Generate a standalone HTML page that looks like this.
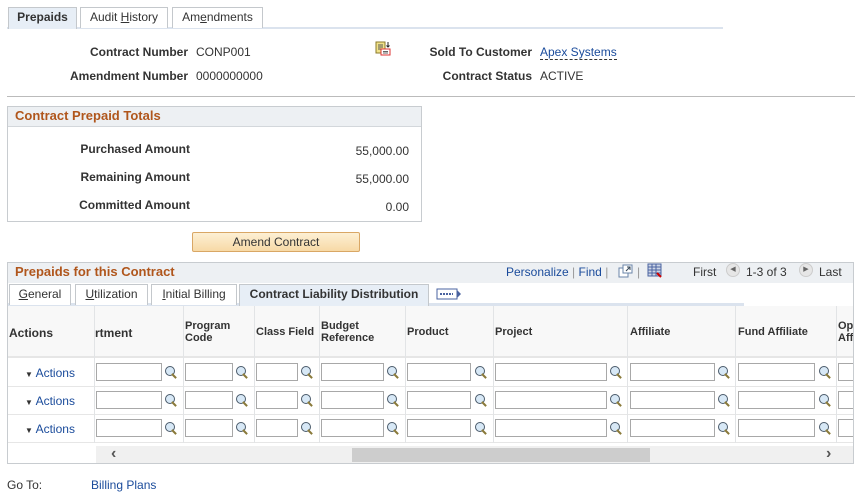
<!DOCTYPE html>
<html><head><meta charset="utf-8"><style>
*{margin:0;padding:0;box-sizing:border-box}
body{width:862px;height:494px;background:#fff;font-family:"Liberation Sans",sans-serif;font-size:12px;color:#333;position:relative;overflow:hidden}
.a{position:absolute;white-space:nowrap}
.b{font-weight:bold}
.lnk{color:#1a4b9b}
.tab{position:absolute;top:7px;height:21px;border:1px solid #c4c8cc;border-bottom:none;background:#fff;color:#333;text-align:center;line-height:19px;font-size:12px}
.h{color:#b0561c;font-weight:bold;font-size:13px}
.in{position:absolute;height:18px;border:1px solid #a8a8a8;background:#fff}
.mg{position:absolute;width:14px;height:14px}
.mg:before{content:"";position:absolute;left:1px;top:1px;width:8px;height:8px;border:1.5px solid #4a5a6a;border-radius:50%;background:#d7e8f6}
.mg:after{content:"";position:absolute;left:9px;top:8px;width:2px;height:6px;background:#8a7a3a;transform:rotate(-45deg)}
.vl{position:absolute;width:1px;background:#e2e4e6}
.st{position:absolute;top:284px;height:21px;border:1px solid #c4c8cc;border-bottom:none;background:#fff;line-height:19px;text-align:center}
</style></head><body>
<div class="a" style="left:7px;top:27px;width:716px;height:2px;background:#dbe3ee"></div>
<div class="tab b" style="left:8px;width:69px;background:#e7eef6;height:22px">Prepaids</div>
<div class="tab" style="left:80px;width:88px">Audit <u>H</u>istory</div>
<div class="tab" style="left:172px;width:91px">Am<u>e</u>ndments</div>

<div class="a b" style="left:40px;top:45px;width:148px;text-align:right">Contract Number</div>
<div class="a" style="left:196px;top:45px">CONP001</div>
<div class="a b" style="left:40px;top:69px;width:148px;text-align:right">Amendment Number</div>
<div class="a" style="left:196px;top:69px">0000000000</div>
<svg class="a" style="left:375px;top:41px" width="18" height="16"><rect x="1" y="1" width="9" height="11" fill="#f1e28a" stroke="#8a7a2a"/><path d="M3 4h5M3 6h5M3 8h5" stroke="#555"/><rect x="6" y="8" width="9" height="6" fill="#fff" stroke="#d33"/><path d="M8 10.5h5M8 12h5" stroke="#666"/><path d="M13 1v5M11.5 4.5l1.5 1.5 1.5-1.5" stroke="#222" fill="none"/></svg>
<div class="a b" style="left:400px;top:45px;width:132px;text-align:right">Sold To Customer</div>
<div class="a" style="left:540px;top:45px;color:#1a4b9b;border-bottom:1px dashed #333;line-height:14px">Apex Systems</div>
<div class="a b" style="left:400px;top:69px;width:132px;text-align:right">Contract Status</div>
<div class="a" style="left:540px;top:69px">ACTIVE</div>
<div class="a" style="left:7px;top:96px;width:848px;height:1px;background:#bbb"></div>

<div class="a" style="left:7px;top:106px;width:415px;height:116px;border:1px solid #c8ccd0"></div>
<div class="a" style="left:8px;top:107px;width:413px;height:20px;background:#edf0f3;border-bottom:1px solid #d3d7db"></div>
<div class="a h" style="left:15px;top:108px">Contract Prepaid Totals</div>
<div class="a b" style="left:40px;top:142px;width:150px;text-align:right">Purchased Amount</div>
<div class="a b" style="left:40px;top:170px;width:150px;text-align:right">Remaining Amount</div>
<div class="a b" style="left:40px;top:198px;width:150px;text-align:right">Committed Amount</div>
<div class="a" style="left:300px;top:144px;width:109px;text-align:right">55,000.00</div>
<div class="a" style="left:300px;top:172px;width:109px;text-align:right">55,000.00</div>
<div class="a" style="left:300px;top:200px;width:109px;text-align:right">0.00</div>
<div class="a" style="left:192px;top:232px;width:168px;height:20px;border:1px solid #d9a765;border-radius:2px;background:linear-gradient(#fdf0d4,#f7d9a6);text-align:center;line-height:18px">Amend Contract</div>

<div class="a" style="left:7px;top:262px;width:847px;height:202px;border:1px solid #c8ccd0"></div>
<div class="a" style="left:8px;top:263px;width:845px;height:20px;background:#edf0f3"></div>
<div class="a h" style="left:15px;top:264px">Prepaids for this Contract</div>
<div class="a" style="left:506px;top:265px"><span class="lnk">Personalize</span> <span style="color:#999">|</span> <span class="lnk">Find</span> <span style="color:#999">|</span></div>
<svg class="a" style="left:618px;top:264px" width="16" height="14"><rect x="1" y="4" width="9" height="9" fill="#fff" stroke="#6a85a8"/><rect x="5" y="1" width="9" height="8" fill="#fff" stroke="#6a85a8"/><path d="M8 7l4-4M9 3h3v3" stroke="#345" fill="none"/></svg>
<div class="a" style="left:637px;top:265px;color:#999">|</div>
<svg class="a" style="left:647px;top:263px" width="16" height="15"><rect x="1" y="1" width="13" height="12" fill="#cdd6e6" stroke="#4a63a0"/><path d="M1 4h13M1 7h13M1 10h13M5 1v12M9 1v12" stroke="#4a63a0"/><path d="M10 10l4 4" stroke="#c00" stroke-width="2"/></svg>
<div class="a" style="left:693px;top:265px">First</div>
<div class="a" style="left:726px;top:263px;width:14px;height:14px;border-radius:50%;background:#e6e6e6;border:1px solid #ccc;font-size:7px;line-height:12px;text-align:center;color:#666">◀</div>
<div class="a" style="left:746px;top:265px">1-3 of 3</div>
<div class="a" style="left:799px;top:263px;width:14px;height:14px;border-radius:50%;background:#e6e6e6;border:1px solid #ccc;font-size:7px;line-height:12px;text-align:center;color:#666">▶</div>
<div class="a" style="left:819px;top:265px">Last</div>

<div class="a" style="left:8px;top:303px;width:736px;height:3px;background:#dbe3ee"></div>
<div class="st" style="left:9px;width:62px"><u>G</u>eneral</div>
<div class="st" style="left:75px;width:73px"><u>U</u>tilization</div>
<div class="st" style="left:151px;width:86px"><u>I</u>nitial Billing</div>
<div class="st b" style="left:239px;width:190px;background:#e7eef6;height:22px">Contract Liability Distribution</div>
<svg class="a" style="left:436px;top:288px" width="26" height="13"><rect x="1" y="1" width="20" height="10" fill="#fff" stroke="#4a63a0"/><path d="M4 6h13" stroke="#4a63a0" stroke-dasharray="2 1" stroke-width="2"/><path d="M21 2l4 4-4 4z" fill="#4a63a0"/></svg>

<div class="a" style="left:8px;top:306px;width:845px;height:52px;background:#f8f8f8;border-bottom:2px solid #e6e6e6"></div>
<div class="a b" style="left:9px;top:326px">Actions</div>
<div class="a b" style="left:95px;top:326px">rtment</div>
<div class="a b" style="left:185px;top:320px;line-height:12px;font-size:11px">Program<br>Code</div>
<div class="a b" style="left:256px;top:326px;font-size:11px">Class Field</div>
<div class="a b" style="left:321px;top:320px;line-height:12px;font-size:11px">Budget<br>Reference</div>
<div class="a b" style="left:407px;top:326px;font-size:11px">Product</div>
<div class="a b" style="left:495px;top:326px;font-size:11px">Project</div>
<div class="a b" style="left:630px;top:326px;font-size:11px">Affiliate</div>
<div class="a b" style="left:738px;top:326px;font-size:11px">Fund Affiliate</div>
<div class="a b" style="left:838px;top:320px;line-height:12px;font-size:11px;width:15px;overflow:hidden">Op<br>Aff</div>

<div class="a" style="left:8px;top:386px;width:845px;height:1px;background:#e6e6e6"></div>
<div class="a" style="left:8px;top:414px;width:845px;height:1px;background:#e6e6e6"></div>
<div class="a" style="left:8px;top:442px;width:845px;height:1px;background:#e6e6e6"></div>
<div class="vl" style="left:94px;top:306px;height:137px"></div>
<div class="vl" style="left:183px;top:306px;height:137px"></div>
<div class="vl" style="left:254px;top:306px;height:137px"></div>
<div class="vl" style="left:319px;top:306px;height:137px"></div>
<div class="vl" style="left:405px;top:306px;height:137px"></div>
<div class="vl" style="left:493px;top:306px;height:137px"></div>
<div class="vl" style="left:627px;top:306px;height:137px"></div>
<div class="vl" style="left:735px;top:306px;height:137px"></div>
<div class="vl" style="left:836px;top:306px;height:137px"></div>

<div class="a lnk" style="left:25px;top:366px"><span style="font-size:8px;color:#333">▼</span> Actions</div>
<div class="a lnk" style="left:25px;top:394px"><span style="font-size:8px;color:#333">▼</span> Actions</div>
<div class="a lnk" style="left:25px;top:422px"><span style="font-size:8px;color:#333">▼</span> Actions</div>

<div style="position:absolute;left:0;top:363px">
<div class="in" style="left:96px;width:66px"></div><div class="mg" style="left:164px;top:2px"></div>
<div class="in" style="left:185px;width:48px"></div><div class="mg" style="left:235px;top:2px"></div>
<div class="in" style="left:256px;width:42px"></div><div class="mg" style="left:300px;top:2px"></div>
<div class="in" style="left:321px;width:63px"></div><div class="mg" style="left:386px;top:2px"></div>
<div class="in" style="left:407px;width:64px"></div><div class="mg" style="left:474px;top:2px"></div>
<div class="in" style="left:495px;width:112px"></div><div class="mg" style="left:609px;top:2px"></div>
<div class="in" style="left:630px;width:85px"></div><div class="mg" style="left:717px;top:2px"></div>
<div class="in" style="left:738px;width:77px"></div><div class="mg" style="left:818px;top:2px"></div>
<div class="in" style="left:838px;width:15px;border-right:none"></div>
</div>
<div style="position:absolute;left:0;top:391px">
<div class="in" style="left:96px;width:66px"></div><div class="mg" style="left:164px;top:2px"></div>
<div class="in" style="left:185px;width:48px"></div><div class="mg" style="left:235px;top:2px"></div>
<div class="in" style="left:256px;width:42px"></div><div class="mg" style="left:300px;top:2px"></div>
<div class="in" style="left:321px;width:63px"></div><div class="mg" style="left:386px;top:2px"></div>
<div class="in" style="left:407px;width:64px"></div><div class="mg" style="left:474px;top:2px"></div>
<div class="in" style="left:495px;width:112px"></div><div class="mg" style="left:609px;top:2px"></div>
<div class="in" style="left:630px;width:85px"></div><div class="mg" style="left:717px;top:2px"></div>
<div class="in" style="left:738px;width:77px"></div><div class="mg" style="left:818px;top:2px"></div>
<div class="in" style="left:838px;width:15px;border-right:none"></div>
</div>
<div style="position:absolute;left:0;top:419px">
<div class="in" style="left:96px;width:66px"></div><div class="mg" style="left:164px;top:2px"></div>
<div class="in" style="left:185px;width:48px"></div><div class="mg" style="left:235px;top:2px"></div>
<div class="in" style="left:256px;width:42px"></div><div class="mg" style="left:300px;top:2px"></div>
<div class="in" style="left:321px;width:63px"></div><div class="mg" style="left:386px;top:2px"></div>
<div class="in" style="left:407px;width:64px"></div><div class="mg" style="left:474px;top:2px"></div>
<div class="in" style="left:495px;width:112px"></div><div class="mg" style="left:609px;top:2px"></div>
<div class="in" style="left:630px;width:85px"></div><div class="mg" style="left:717px;top:2px"></div>
<div class="in" style="left:738px;width:77px"></div><div class="mg" style="left:818px;top:2px"></div>
<div class="in" style="left:838px;width:15px;border-right:none"></div>
</div>

<div class="a" style="left:96px;top:446px;width:757px;height:17px;background:#f0f0f0"></div>
<div class="a" style="left:352px;top:448px;width:298px;height:14px;background:#cdcdcd"></div>
<div class="a b" style="left:111px;top:445px;font-size:16px;color:#555">‹</div>
<div class="a b" style="left:826px;top:445px;font-size:16px;color:#555">›</div>

<div class="a" style="left:7px;top:478px">Go To:</div>
<div class="a lnk" style="left:91px;top:478px">Billing Plans</div>
</body></html>
